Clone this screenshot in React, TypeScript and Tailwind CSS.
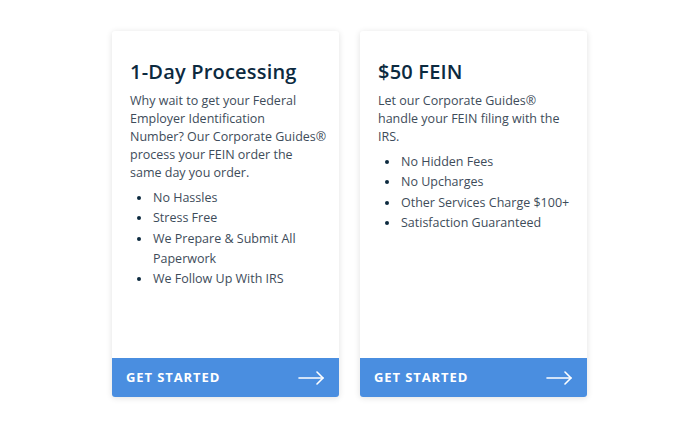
import React from 'react';

const CARDS = [
  {
    title: '1-Day Processing',
    lines: ['Why wait to get your Federal', 'Employer Identification', 'Number? Our Corporate Guides®', 'process your FEIN order the', 'same day you order.'],
    items: ['No Hassles', 'Stress Free', 'We Prepare & Submit All Paperwork', 'We Follow Up With IRS'],
  },
  {
    title: '$50 FEIN',
    lines: ['Let our Corporate Guides®', 'handle your FEIN filing with the', 'IRS.'],
    items: ['No Hidden Fees', 'No Upcharges', 'Other Services Charge $100+', 'Satisfaction Guaranteed'],
  },
];

const Arrow = () => (
  <svg width="27" height="14" viewBox="0 0 27 14" fill="none" stroke="white" strokeWidth="1.6" strokeLinecap="round" strokeLinejoin="round">
    <path d="M1 7h24" />
    <path d="M19 1l6 6-6 6" />
  </svg>
);

export default function App() {
  return (
    <div className="w-[700px] h-[432px] bg-white flex pl-[112px] pt-[31px] gap-[21px]" style={{ fontFamily: '"Open Sans", "Liberation Sans", sans-serif' }}>
      {CARDS.map(card => (
        <div key={card.title} className="w-[227px] h-[366px] bg-white rounded-[3px] shadow-[0_1px_6px_rgba(0,0,0,0.12)] flex flex-col overflow-hidden">
          <div className="flex-1 pl-[18px] pr-[10px] pt-[28px]">
            <h2 className="text-[20px] leading-[26px] font-semibold text-[#0c2a3f] tracking-[0.2px]">{card.title}</h2>
            <p className="mt-[7px] text-[12.5px] leading-[18px] text-[#3e4c5a] whitespace-nowrap">
              {card.lines.map((line, i) => (
                <React.Fragment key={i}>
                  {line}
                  {i < card.lines.length - 1 && <br />}
                </React.Fragment>
              ))}
            </p>
            <ul className="mt-[6px] pl-[22px] list-disc text-[12.5px] leading-[20.3px] text-[#3e4c5a] marker:text-[#0c2a3f]">
              {card.items.map(item => (
                <li key={item} className="pl-[1px]">{item}</li>
              ))}
            </ul>
          </div>
          <button className="h-[39px] bg-[#4a8ee0] flex items-center justify-between pl-[14px] pr-[14px] text-white text-[13px] font-bold tracking-[0.9px]">
            <span>GET STARTED</span>
            <Arrow />
          </button>
        </div>
      ))}
    </div>
  );
}
